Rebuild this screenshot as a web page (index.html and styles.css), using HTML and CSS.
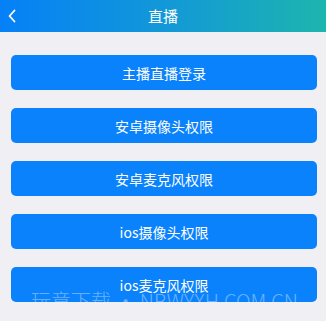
FILE: index.html
```html
<!DOCTYPE html>
<html lang="zh">
<head>
<meta charset="utf-8">
<link rel="stylesheet" href="styles.css">
</head>
<body>
<header class="nav">
  <svg class="back" width="10" height="14" viewBox="0 0 10 14"><path d="M7.5 1.5 L2.5 7 L7.5 12.5" fill="none" stroke="#fff" stroke-width="1.8" stroke-linecap="round" stroke-linejoin="round"/></svg>
  <h1 class="title">直播</h1>
</header>
<main class="list">
  <button class="btn">主播直播登录</button>
  <button class="btn">安卓摄像头权限</button>
  <button class="btn">安卓麦克风权限</button>
  <button class="btn">ios摄像头权限</button>
  <button class="btn">ios麦克风权限</button>
</main>
<div class="watermark"><span>玩意下载 • NBWYXH.COM.CN</span></div>
</body>
</html>
```
FILE: styles.css
```css
html, body {
  margin: 0;
  padding: 0;
}
body {
  background: #efeff4;
  font-family: "Noto Sans CJK SC", "Noto Sans", sans-serif;
  width: 326px;
  height: 321px;
  overflow: hidden;
  position: relative;
}
.nav {
  height: 32px;
  background: linear-gradient(90deg, #0680f7 0%, #1298d8 50%, #1db5ae 100%);
  display: flex;
  align-items: center;
  justify-content: center;
  position: relative;
}
.back {
  position: absolute;
  left: 7px;
  top: 9px;
}
.title {
  margin: 0;
  color: #fff;
  font-size: 15px;
  font-weight: normal;
  line-height: 32px;
}
.list {
  display: flex;
  flex-direction: column;
  gap: 18px;
  padding: 23px 9px 0 11px;
}
.btn {
  height: 35px;
  border: none;
  border-radius: 5px;
  background: #0a82fc;
  color: #fff;
  font-family: inherit;
  font-size: 14px;
  padding: 0;
  margin: 0;
}
.watermark {
  position: absolute;
  left: 31px;
  top: 287px;
  height: 15px;
  overflow: hidden;
  pointer-events: none;
}
.watermark span {
  display: block;
  font-size: 20px;
  line-height: 28px;
  color: rgba(255, 255, 255, 0.4);
  white-space: nowrap;
  font-family: "Noto Sans CJK SC", "Noto Sans", sans-serif;
  font-weight: 300;
}
```
